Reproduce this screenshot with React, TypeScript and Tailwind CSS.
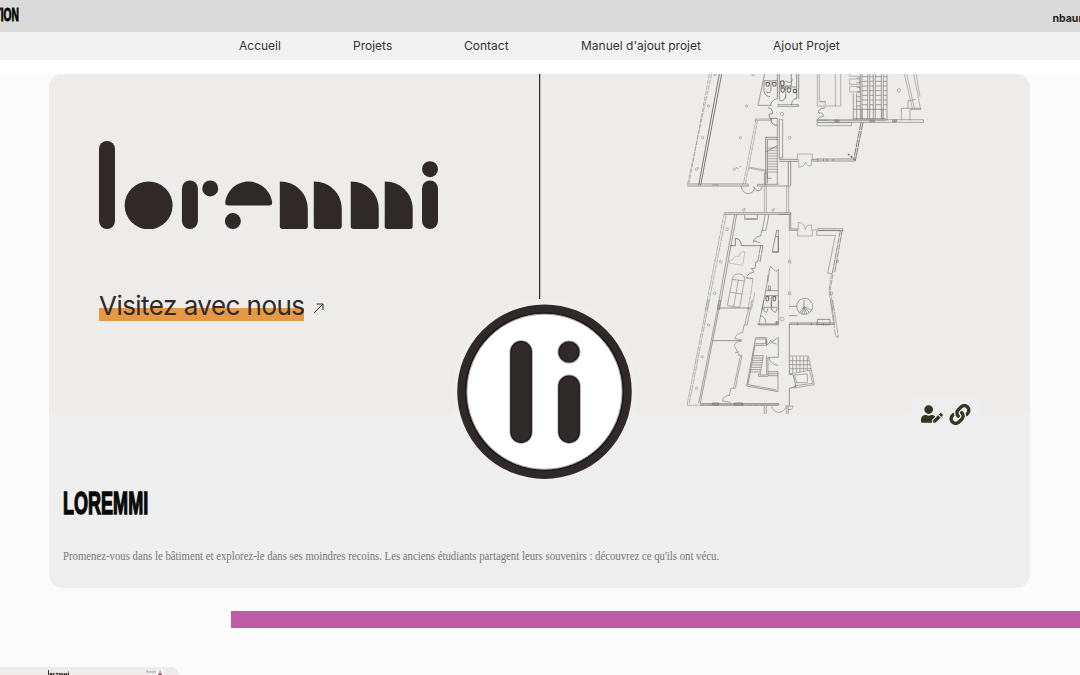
import React from "react";
import { FaLink, FaUserEdit } from "react-icons/fa";

const links = [
  { label: "Accueil", box: "w-[42px]" },
  { label: "Projets", box: "w-[39px]" },
  { label: "Contact", box: "w-[45px]" },
  { label: "Manuel d'ajout projet", box: "w-[120px]" },
  { label: "Ajout Projet", box: "w-[67px] tracking-[0.08px]" },
];

function Logo({ className }: { className: string }) {
  return (
    <svg viewBox="57 32 1018 265" preserveAspectRatio="none" className={className} fill="#302929" aria-hidden="true">
      <rect x="57" y="32" width="48" height="265" rx="24" />
      <circle cx="206" cy="226" r="72" />
      <rect x="306" y="151" width="48" height="146" rx="24" />
      <circle cx="391" cy="175" r="24" />
      <path d="M436 217C440 182 470 154 506 154C542 154 573 182 577 217Q577 226 568 226H445Q436 226 436 217Z" />
      <circle cx="459" cy="273" r="24" />
      {[600, 702, 813, 915].map((x) => (
        <path key={x} transform={`translate(${x} 0)`} d="M0 154C48 154 84 190 84 238V289Q84 297 76 297H8Q0 297 0 289Z" />
      ))}
      <rect x="1027" y="151" width="48" height="146" rx="24" />
      <circle cx="1051" cy="117" r="24" />
    </svg>
  );
}

function FloorPlan() {
  return (
    <svg viewBox="680 74 250 340" className="h-[340px] w-[250px]" fill="none" aria-hidden="true">
      {/* North wing */}
      <g transform="translate(680 70) scale(0.33333)" stroke="#969594" strokeWidth="2">
        <path d="M95 12L22 346M88 12L27 340" strokeDasharray="14 3" />
        <path d="M118 12L56 346M125 12L62 346" stroke="#777" strokeWidth="3" />
        <path d="M22 342H205M22 348H205M232 343H296M232 348H332M97 345H116" stroke="#777" />
        <path d="M228 147L190 343M233 152L196 343" strokeDasharray="14 2" />
        <path d="M225 147H275V151H225M205 291L262 301M205 294L257 304" />
        <path d="M254 12L234 106H273V109M250 32H292M292 104H356V109H292" stroke="#777" />
        <path d="M252 33V62M273 34V64M292 12V86M298 12V90M356 12V86M350 12V85" stroke="#666" />
        <path d="M252 62A18 18 0 0 0 270 80M273 66A16 16 0 0 1 258 66M292 86Q273 90 272 107M298 92Q316 96 317 76M335 105Q334 88 352 84" stroke="#666" />
        <path d="M298 48H334V12M298 51H350M317 51V85M317 32Q332 45 338 28" stroke="#666" />
        <path d="M258 37v6a5 6 0 0 0 10 0v-6zM278 37v6a5 6 0 0 0 10 0v-6zM302 33v9a5 6 0 0 0 10 0v-9zM303 54v7a5 6 0 0 0 10 0v-7zM322 54v7a5 6 0 0 0 10 0v-7zM340 58h9v10h-9z" stroke="#555" strokeWidth="3" />
        <path d="M264 113Q280 116 277 131Q262 131 270 145H291M272 147Q274 166 292 166" stroke="#555" />
        <path d="M292 145V342M298 145V266M302 149H308V264H298" stroke="#777" />
        <path d="M257 344V202H292M262 340V208H292M256 246L292 227" stroke="#666" />
        <path d="M262 234H292M262 242H292M262 250H292M262 258H292M262 266H292M262 274H292M262 282H292M262 290H292M262 298H292M262 306H292" stroke="#888" />
        <path d="M253 309H262V325H275M253 309V342" stroke="#777" />
        <path d="M298 268H354M298 274H354M332 274V346M325 274V346M394 268H415M394 273H415M411 267H525V273H411M430 267V273M442 267V273M460 267V273" stroke="#666" />
        <path d="M352 268V252H397V268M356 268V292Q374 290 376 276Q380 290 394 287V268" />
        <path d="M549 157L526 272M543 157L521 270" stroke="#666" strokeWidth="2.500" strokeDasharray="24 2" />
        <path d="M504 252L508 256M512 258L517 263" stroke="#666" strokeWidth="4" />
        <path d="M412 12V108H466V12M418 12V94H436V106M482 12V108H466M418 96H436" />
        <path d="M436 113Q412 117 415 129Q430 126 430 139Q415 140 412 151H440" stroke="#666" />
        <path d="M411 149H730V157H411ZM411 158H515V167H411ZM436 152H618" stroke="#888" />
        <path d="M465 150h5v6h-5zM472 150h5v6h-5zM570 150h5v6h-5zM578 150h5v6h-5zM638 150h5v6h-5zM645 150h5v6h-5z" stroke="#777" />
        <path d="M509 12V19H540M509 27H539V43H509ZM509 49H539V66H509Z" />
        <path d="M520 70V150M530 70V150M541 12V148M546 12V148M563 12V148M569 12V148M580 12V148M586 12V148M604 12V148M610 12V148M621 12V152" stroke="#777" />
        {[20, 34, 48, 62, 76, 90, 104].map((y) => (
          <path key={y} d={`M546 ${y}H563M569 ${y}H580M586 ${y}H604M610 ${y}H621M530 ${y + 4}H540`} stroke="#777" />
        ))}
        <path d="M520 118H618M520 146H618M546 118V148M606 118V148" stroke="#777" strokeWidth="2" />
        <path d="M673 12L697 115M680 12L703 115M701 12L722 118M708 12L720 80" />
        <path d="M664 151V115H722V118H690V151M684 115V92L708 88" stroke="#888" />
        <circle cx="657" cy="61" r="5" />
        <circle cx="306" cy="132" r="5" />
        <circle cx="329" cy="203" r="4" />
        {[[86, 108], [200, 108], [68, 203], [181, 203], [49, 298], [163, 298], [105, 14], [219, 14]].map(([x, y]) => (
          <circle key={`${x}-${y}`} cx={x} cy={y} r="3.5" />
        ))}
        <path d="M52 291L57 296M169 293L175 296M179 290H182" stroke="#666" />
        <path d="M183 348Q187 370 205 371Q222 369 224 353M220 349Q229 368 243 359L246 349M205 343V349M232 343V349" stroke="#777" />
      </g>

      {/* Central wing */}
      <g transform="translate(680 185) scale(0.33333)" stroke="#969594" strokeWidth="2">
        <path d="M253 0V83M259 0V83M320 0V83M326 0V83" />
        <path d="M187 74L195 70V76L190 80ZM275 74L283 70V76L278 80Z" />
        <path d="M133 83H332V88H133M295 88H328V136H354M332 83V132H354" stroke="#777" />
        <path d="M133 83L76 375M139 88L82 375" strokeDasharray="15 2" />
        <path d="M164 88L112 375M170 88L118 375" stroke="#777" strokeWidth="2" />
        <path d="M194 89V103H232V89M197 101H230" stroke="#777" />
        <path d="M256 88L247 136M267 88L258 136H245L242 153M220 173Q224 153 242 153M220 167L241 173" stroke="#777" />
        <path d="M150 182H166M184 182H249M166 182V160Q184 162 184 182" stroke="#555" />
        <path d="M249 182L240 231M242 182L233 231H227L225 250H214L222 261M221 262Q202 263 200 279L219 281" stroke="#666" strokeDasharray="24 2" />
        <path d="M219 281L213 323L203 375M224 323L214 375" strokeDasharray="15 2" />
        <path d="M148 234L188 241L195 200Q178 198 177 214Q163 211 157 225L149 225Z" stroke="#b0afae" />
        <path d="M156 285Q160 264 179 267Q195 269 195 288M157 283L193 288L179 367L142 362ZM175 285L161 365M150 322L187 327" stroke="#888" />
        <path d="M290 136L277 200H295V136ZM287 154H295V202H277" stroke="#666" />
        <path d="M267 270V256L272 244L288 260L295 253V375M266 270L246 375M264 270V290" stroke="#777" />
        <path d="M256 317H295M256 332H295M265 303H271V315H265ZM274 334V375M252 369V375" stroke="#666" />
        <path d="M258 335v8a4 5 0 0 0 8 0v-8zM279 335v8a4 5 0 0 0 8 0v-8z" stroke="#555" strokeWidth="3" />
        <path d="M329 138V375" stroke="#d0cfcd" />
        {[230, 325].map((y) => (
          <rect key={y} x="325.500" y={y - 4} width="7" height="8" rx="1" />
        ))}
        <path d="M355 136V112Q375 114 376 134Q378 119 394 120V136M353 138V153H397V138" />
        <path d="M394 135H412M412 131H488V137H412M410 137V151H466L443 265H455" stroke="#888" />
        <path d="M412 136H482" stroke="#666" strokeWidth="2" />
        <path d="M487 133L464 263M481 137L457 266" stroke="#808080" strokeWidth="2.500" strokeDasharray="20 2" />
        <path d="M454 266L447 318L457 375M459 266L450 318L462 375" stroke="#888" strokeDasharray="16 2" />
        <rect x="469" y="226" width="7" height="7" />
        <rect x="451" y="321" width="7" height="7" />
        {[[141, 133], [122, 230], [104, 325]].map(([x, y]) => (
          <circle key={x} cx={x} cy={y} r="4" />
        ))}
      </g>

      {/* South wing */}
      <g transform="translate(680 300) scale(0.33333)" stroke="#969594" strokeWidth="2">
        <path d="M83 0L22 312M88 0L28 310M22 312V316H296" strokeDasharray="18 2" />
        <path d="M118 0L56 310M122 0L61 310" stroke="#777" />
        <path d="M116 24H211M97 122H184" stroke="#666" />
        <path d="M216 0L202 75H192L188 98M207 20L194 76M188 97Q166 101 165 116L187 120M185 124Q163 125 163 137L177 165M177 155L165 159M174 166H186L166 265H153L148 286M181 168L161 264M150 286Q130 286 127 303L152 307" stroke="#888" />
        <path d="M61 311H296V315H61M97 309H116V315H97ZM163 309H188V315H163Z" stroke="#666" />
        <path d="M252 0L236 75H296V0M246 22H292M274 0V21M246 22Q248 35 260 37L264 24M274 23Q279 39 287 37L292 24M240 47Q258 50 257 69" stroke="#777" />
        <path d="M232 72H294M288 65H293V70H288Z" stroke="#555" />
        <path d="M327 19H352M327 47H352M372 19V0M372 20L358 40M372 20L365 43M372 20L373 44M372 20L381 43M372 20L388 37M372 20L394 30" stroke="#777" />
        <circle cx="374" cy="19" r="24" stroke="#777" />
        <circle cx="306" cy="57" r="6" />
        <path d="M328 73H465M328 69H465M328 72V222M412 70V58H450V70M412 74H452M352 69V76M394 69V76M410 69V76M430 69V76" stroke="#666" />
        <path d="M451 0L467 110L475 112L458 0M457 20L462 65" stroke="#888" strokeDasharray="20 2" />
        <path d="M227 113H260V136H225M229 117H257V131H225M260 121V135Q270 130 272 121Q278 132 290 132M272 130L292 114M295 110V172M227 113L200 258L294 275V215M225 136L204 254L290 270" stroke="#777" />
        <path d="M217 167H250L241 222H236V229H264V172H295M260 166V225H240M267 172Q270 194 295 196" stroke="#777" />
        <path d="M218 174H248M217 181H247M216 188H246M215 195H245M213 202H243M212 209H242M211 216H240M264 215H294M264 221H294M264 227H294" stroke="#777" />
        <path d="M328 168H385L394 210L328 222M338 170V219M349 170V218M360 170V216M371 170V214M382 170V211M328 182H388M328 194H390M328 206H393" stroke="#888" />
        <path d="M394 210L403 254L342 264V258L398 250L389 213M344 225L382 222V248H350Z" stroke="#888" />
        <path d="M328 222L340 225L348 260L328 265V316" stroke="#666" />
        <path d="M253 317V342M259 317V342M320 317V342M325 317V342M275 318Q278 336 296 337Q313 336 317 322M316 318H339Q338 331 324 329" stroke="#888" />
        {[[86, 75], [67, 170], [49, 265]].map(([x, y]) => (
          <circle key={x} cx={x} cy={y} r="3.5" />
        ))}
      </g>
    </svg>
  );
}

function Emblem() {
  return (
    <svg viewBox="450 298 188 188" className="absolute top-[224px] left-[401px] h-[188px] w-[188px]" aria-hidden="true">
      <circle cx="544.500" cy="391.700" r="92" fill="#eeeeee" />
      <circle cx="544.500" cy="391.700" r="82.500" fill="#fff" stroke="#302929" strokeWidth="9.500" />
      <circle cx="544.500" cy="391.700" r="78.800" fill="none" stroke="#1c1717" strokeWidth="1.400" />
      <circle cx="544.500" cy="391.700" r="77.500" fill="none" stroke="#a5a2a2" strokeWidth="1" />
      <g fill="#302929" stroke="#a5a2a2" strokeWidth="2.400">
        <rect x="510.700" y="341.500" width="20.800" height="101" rx="10.400" />
        <rect x="558.700" y="375.800" width="20.800" height="66.700" rx="10.400" />
        <circle cx="569" cy="352" r="10.300" />
      </g>
      <g fill="#302929" stroke="#1c1717" strokeWidth="1.200">
        <rect x="510.900" y="341.700" width="20.400" height="100.600" rx="10.200" />
        <rect x="558.900" y="376" width="20.400" height="66.300" rx="10.200" />
        <circle cx="569" cy="352" r="10" />
      </g>
    </svg>
  );
}

export default function App() {
  return (
    <div className="flex h-[675px] w-[1080px] flex-col overflow-hidden bg-white font-['Inter',sans-serif]">
      <header className="flex h-8 shrink-0 items-start justify-between bg-[#dadada]">
        <div className="flex w-[19px] justify-end pt-[5px]">
          <span className="origin-right scale-x-[0.57] font-['Liberation_Sans',sans-serif] text-[18px] leading-5 font-bold text-black [-webkit-text-stroke:0.8px_black]">TION</span>
        </div>
        <span className="w-[27.500px] overflow-hidden pt-[10.500px] text-[10.5px] leading-4 font-bold whitespace-nowrap text-[#222]">nbaur</span>
      </header>
      <nav className="flex h-7 shrink-0 items-center gap-[72px] bg-[#f2f2f2] pl-[239px] text-[12px] text-[#333]">
        {links.map((l) => (
          <a key={l.label} className={`shrink-0 whitespace-nowrap ${l.box}`}>{l.label}</a>
        ))}
      </nav>
      <main className="mt-[14px] flex grow flex-col bg-[#fbfbfb]">
        <article className="relative ml-[49px] flex h-[514px] w-[981px] shrink-0 flex-col rounded-[14px] bg-[#eeeeee]">
          <div className="flex h-[340px] shrink-0 rounded-t-[14px] bg-[#edecea]">
            <div className="flex w-[490px] flex-col pt-[67px] pl-[50px]">
              <Logo className="h-[88px] w-[339px]" />
              <div className="mt-[62px] flex items-center">
                <span className="flex h-[30px] w-[205px] items-center bg-linear-to-b from-transparent from-[17px] to-[#e59945] to-[17px] text-[26px] leading-[30px] tracking-[-0.54px] whitespace-nowrap text-[#302929]">Visitez avec nous</span>
                <svg viewBox="0 0 12 12" className="mt-[3px] ml-[9px] h-3 w-3" fill="none" stroke="#302929" strokeWidth="1" aria-hidden="true">
                  <path d="M1 11L10 2M3.500 2H10V8" />
                </svg>
              </div>
            </div>
            <div className="h-[225px] w-[2px] border-r border-[#bdbbb9] bg-[#302929]" />
            <div className="ml-[139px]">
              <FloorPlan />
            </div>
          </div>
          <div className="flex flex-col pt-[72px] pl-[14px]">
            <h2 className="w-fit origin-left scale-x-[0.582] text-[31px] leading-9 font-bold text-[#080808] font-['Liberation_Sans',sans-serif] [-webkit-text-stroke:1.4px_#080808]">LOREMMI</h2>
            <p className="mt-[24px] w-fit origin-left scale-x-[0.896] font-['Liberation_Serif',serif] text-[12px] leading-5 whitespace-nowrap text-[#777]">
              Promenez-vous dans le bâtiment et explorez-le dans ses moindres recoins. Les anciens étudiants partagent leurs souvenirs : découvrez ce qu'ils ont vécu.
            </p>
          </div>
          <Emblem />
          <div className="absolute top-[323px] left-[862px] flex h-[34px] w-[70px] items-center gap-[6px] rounded-[8px] bg-[#eeeeee] pl-[10px] text-[#343523]">
            <FaUserEdit className="h-[18px] w-[22px]" />
            <FaLink className="h-[21px] w-[22px]" />
          </div>
        </article>
        <div className="mt-[22.500px] ml-[231px] h-[17.500px] shrink-0 bg-[#bf5aa4]" />
        <section className="mt-[39px] flex h-2 w-[179px] shrink-0 items-start overflow-hidden rounded-tr-[12px] bg-[#edecea] pt-[3px] pl-[48px]">
          <Logo className="h-[6px] w-[21px] shrink-0" />
          <span className="ml-[77px] w-[9px] shrink-0 text-[3px] leading-[4px] whitespace-nowrap text-[#777]">Accueil</span>
          <svg viewBox="0 0 8 8" className="mt-[-1px] ml-[1px] h-2 w-2 shrink-0" aria-hidden="true">
            <circle cx="4" cy="4" r="4" fill="#fff" />
            <path d="M4 1V4M2 5.500Q4 3 6 5.500Z" fill="#967" stroke="#967" />
          </svg>
        </section>
      </main>
    </div>
  );
}
